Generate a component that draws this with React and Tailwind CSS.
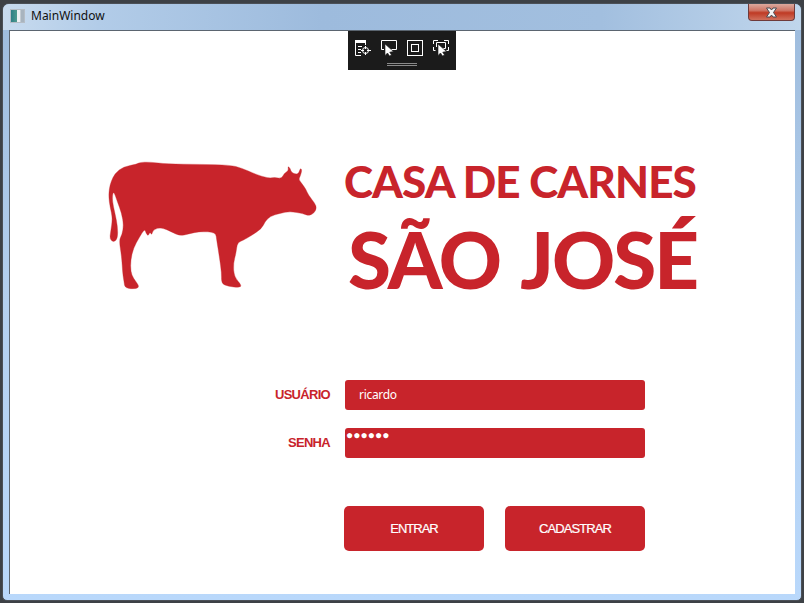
const COW_POINTS = [
  [118, 37], [150, 36], [200, 42], [300, 43], [390, 45], [425, 54], [465, 72], [505, 85], [525, 82], [545, 86], [552, 70], [566, 62], [563, 48], [571, 55], [574, 68], [590, 73], [597, 68], [601, 54], [606, 60], [601, 78], [596, 88], [605, 100], [618, 118], [625, 135], [645, 160], [650, 175], [641, 191], [625, 197], [610, 191], [570, 184], [540, 190], [510, 199], [495, 215], [485, 236], [455, 256], [430, 271], [412, 278], [408, 310], [400, 340], [402, 380], [425, 406], [418, 413], [385, 409], [364, 401], [365, 370], [358, 320], [350, 270], [347, 247], [300, 244], [265, 252], [240, 258], [215, 246], [185, 232], [160, 238], [155, 256], [150, 245], [145, 258], [138, 250], [134, 236], [118, 262], [100, 295], [92, 330], [92, 365], [100, 385], [118, 408], [110, 417], [75, 415], [72, 395], [68, 370], [65, 320], [57, 270], [66, 255], [71, 225], [65, 190], [52, 155], [40, 120], [36, 150], [45, 190], [53, 230], [53, 265], [42, 277], [29, 268], [32, 245], [38, 205], [30, 170], [26, 140], [28, 115], [33, 95], [45, 70], [70, 50], [110, 43],
]

// rounds the outline off through the midpoints of the traced points
function smoothPath(points) {
  const mid = (a, b) => [(a[0] + b[0]) / 2, (a[1] + b[1]) / 2]
  const start = mid(points[points.length - 1], points[0])
  let d = `M${start[0]} ${start[1]}`
  points.forEach((p, i) => {
    const m = mid(p, points[(i + 1) % points.length])
    d += ` Q${p[0]} ${p[1]} ${m[0]} ${m[1]}`
  })
  return d + ' Z'
}

function CowLogo() {
  return (
    <svg width="225" height="150" viewBox="0 0 675 450" className="shrink-0">
      <path d={smoothPath(COW_POINTS)} fill="#c8242b" stroke="#c8242b" strokeWidth="1" strokeLinejoin="round" />
    </svg>
  )
}

function Cursor({ x = 0 }) {
  return (
    <path
      transform={`translate(${x} 0)`}
      d="M4 4V15.5L6.5 13L8.5 16L10.5 15L8.7 12.2L12.5 11.5Z"
      fill="white"
      stroke="#1b1b1b"
      strokeWidth=".6"
    />
  )
}

function IconSelectElement() {
  return (
    <svg width="16" height="16" viewBox="0 0 16 16" fill="none" stroke="white" strokeWidth="1">
      <path d="M0 1.5H11" strokeWidth="3" />
      <path d="M.5 3V15.5H6M3 6.5H7M3 9.5H6M3 12.5H6M10.5 3V5" />
      <circle cx="10.5" cy="10.5" r="3" />
      <path d="M10.5 6V9M10.5 12V15M6 10.5H9M12 10.5H16" />
    </svg>
  )
}

function IconPreview() {
  return (
    <svg width="16" height="16" viewBox="0 0 16 16" fill="none" stroke="white" strokeWidth="1">
      <path d="M.5 9.5V.5H15.5V9.5H10M.5 9.5H3" />
      <Cursor />
    </svg>
  )
}

function IconFrame() {
  return (
    <svg width="16" height="16" viewBox="0 0 16 16" fill="none" stroke="white" strokeWidth="1">
      <rect x=".5" y=".5" width="15" height="15" />
      <rect x="4.5" y="4.5" width="7" height="7" />
    </svg>
  )
}

function IconTrack() {
  return (
    <svg width="16" height="16" viewBox="0 0 16 16" fill="none" stroke="white" strokeWidth="1">
      <path d="M.5 4V.5H5M11 .5H15.5V4M.5 7V10.5H2.5M15.5 7V10.5H13.5" />
      <path d="M3.5 7V2.5H12.5V8.5H10" />
      <Cursor x={1} />
    </svg>
  )
}

function CloseGlyph() {
  return (
    <svg width="13" height="11" viewBox="0 0 13 11">
      <path d="M1.5 1H5L6.5 3L8 1H11.5L8.5 5.5L11.5 10H8L6.5 8L5 10H1.5L4.5 5.5Z" fill="#f4f4f4" stroke="#4a4a52" strokeWidth="1" />
    </svg>
  )
}

export default function App() {
  return (
    <div className="w-[804px] h-[603px] overflow-hidden bg-[#3d4146] pt-[3px] px-[2px] font-['Liberation_Sans',sans-serif]">
      <div className="h-[598px] rounded-t-[7px] rounded-b-[5px] border border-[#4b5057] bg-gradient-to-b from-[#9dbbdc] via-[#b4d0ef] to-[#b9d8fb] flex flex-col">
        {/* Title bar */}
        <div className="h-[26px] shrink-0 flex items-start rounded-t-[6px] bg-[linear-gradient(90deg,#c8dbef_0%,#b2cce8_12%,#9dbbdd_40%,#a2bfdf_75%,#c0d6ec_100%)]">
          <div className="mt-[5px] ml-[7px] w-[15px] h-[14px] border border-[#b5bdc6] bg-[linear-gradient(90deg,#2e7f86_0%,#4d9a8e_45%,#eef1f3_50%,#eef1f3_70%,#a8b4bf_75%)]" />
          <span className="mt-[3px] ml-[6px] text-[12px] leading-[18px] text-[#101010] font-['Noto_Sans',sans-serif]">MainWindow</span>
          <div className="ml-auto mr-[6px] w-[47px] h-[17px] flex items-center justify-center rounded-b-[4px] border border-t-0 border-[#6e3a3a] bg-[linear-gradient(180deg,#dba99e_0%,#cf7565_40%,#bf3a24_55%,#d0705c_100%)]">
            <CloseGlyph />
          </div>
        </div>

        {/* Client area */}
        <div className="relative mx-[6px] w-[786px] h-[564px] bg-white border-t border-l border-[#5b6570] flex flex-col">
          {/* Debug toolbar */}
          <div className="absolute left-[338px] top-0 w-[108px] h-[39px] bg-[#1b1b1b] flex flex-col items-center pt-[9px]">
            <div className="flex gap-[10px]">
              <IconSelectElement />
              <IconPreview />
              <IconFrame />
              <IconTrack />
            </div>
            <div className="mt-[7px] w-[30px] h-[1px] bg-[#8a8a8a]" />
            <div className="mt-[1px] w-[30px] h-[1px] bg-[#8a8a8a]" />
          </div>

          {/* Logo */}
          <div className="flex pt-[119px] pl-[90px]">
            <CowLogo />
            <div className="ml-[19px] pt-[9px] font-['Lato',sans-serif] font-black text-[#c8242b] whitespace-nowrap">
              <div className="text-[44px] leading-[44px] tracking-[-0.9px]">CASA DE CARNES</div>
              <div className="mt-[17px] ml-[4px] text-[78px] leading-[78px] tracking-[-2px] [word-spacing:6px]">SÃO JOSÉ</div>
            </div>
          </div>

          {/* Login form */}
          <div className="mt-[80px] grid grid-cols-[320px_300px] gap-x-[15px] gap-y-[18px] items-center">
            <label className="text-right text-[13px] font-bold tracking-[-0.7px] text-[#c8242b]">USUÁRIO</label>
            <div className="h-[30px] rounded-[3px] bg-[#c8242b] pl-[14px] flex items-center text-[12px] tracking-[-0.3px] text-white font-['Noto_Sans',sans-serif]">ricardo</div>
            <label className="text-right text-[13px] font-bold tracking-[-0.7px] text-[#c8242b]">SENHA</label>
            <div className="h-[30px] rounded-[3px] bg-[#c8242b] pl-[1px] text-[12px] leading-[14px] text-white">●●●●●●</div>
            <div className="col-start-2 mt-[30px] -ml-px w-[301px] flex justify-between">
              <button className="w-[140px] h-[45px] rounded-[5px] bg-[#c8242b] text-[13px] tracking-[-1px] [-webkit-text-stroke:0.2px_white] text-white">ENTRAR</button>
              <button className="w-[140px] h-[45px] rounded-[5px] bg-[#c8242b] text-[13px] tracking-[-0.9px] [-webkit-text-stroke:0.2px_white] text-white">CADASTRAR</button>
            </div>
          </div>
        </div>
      </div>
    </div>
  )
}
